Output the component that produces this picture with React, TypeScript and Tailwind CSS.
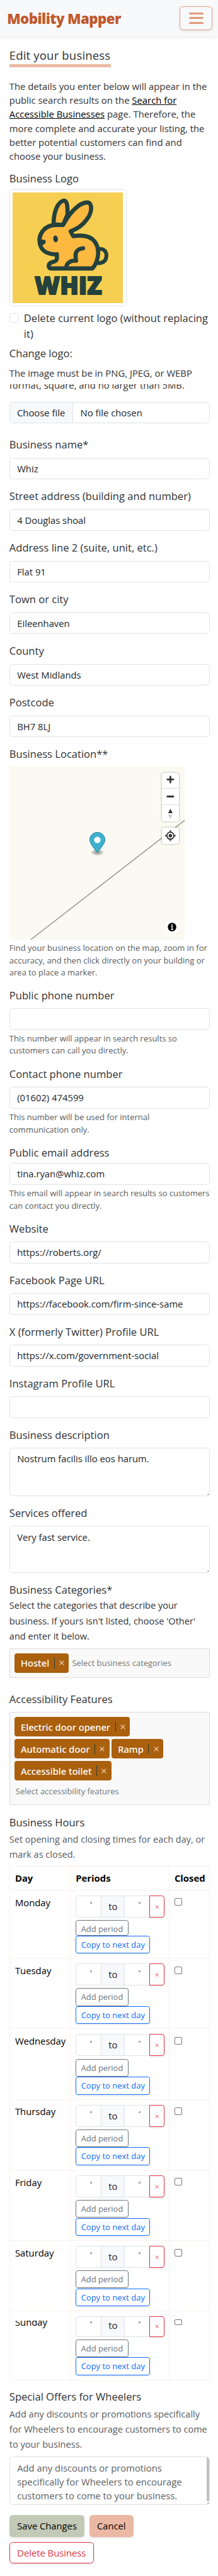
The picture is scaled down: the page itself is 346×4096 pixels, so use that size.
import type { ReactNode } from "react";

function Label({ children }: { children: ReactNode }) {
  return <div className="h-[24.86px] whitespace-nowrap text-[16.57px] leading-[24.86px] text-[#2f3235]">{children}</div>;
}

function Input({ value = "" }: { value?: string }) {
  return (
    <div className="h-[34.85px] rounded-[5.5px] border border-[#dee2e6] bg-white pl-[11.4px] text-[14.8px] leading-[33px] whitespace-nowrap text-[#212529]">
      {value}
    </div>
  );
}

function Field({ label, value }: { label: string; value?: string }) {
  return (
    <div className="h-[82px]">
      <Label>{label}</Label>
      <div className="h-[7.43px]" />
      <Input value={value} />
    </div>
  );
}

function Help({ lines }: { lines: string[] }) {
  return (
    <div className="pt-[4px] text-[13px] leading-[19.5px] whitespace-nowrap text-[#595c5f]">
      {lines.map((l) => (
        <div key={l}>{l}</div>
      ))}
    </div>
  );
}

function Grip() {
  return (
    <svg className="absolute right-[1px] bottom-[1px] h-[2px] w-[2px]" viewBox="0 0 2 2">
      <path d="M0 2L2 0V2Z" fill="#555" />
    </svg>
  );
}

function Tag({ children }: { children: ReactNode }) {
  return (
    <div className="flex h-[31.3px] items-center rounded-[4px] bg-[#aa600d] pl-[10px] font-['Noto_Sans',sans-serif] text-[14.7px] font-medium text-white">
      <span className="whitespace-nowrap">{children}</span>
      <span className="ml-[7.5px] h-[16.6px] w-[1px] bg-[#2f3d31]" />
      <span className="flex w-[22.5px] justify-center">
        <svg className="h-[8px] w-[8px]" viewBox="0 0 8 8">
          <path d="M0.6 0.6L7.4 7.4M7.4 0.6L0.6 7.4" stroke="#f8ddc0" strokeWidth="1.1" />
        </svg>
      </span>
    </div>
  );
}

function Clock() {
  return (
    <svg className="h-[3.4px] w-[3.4px]" viewBox="0 0 10 10">
      <circle cx="5" cy="5" r="4" fill="none" stroke="#444" strokeWidth="1.8" />
      <path d="M5 2.5V5H7" fill="none" stroke="#444" strokeWidth="1.2" />
    </svg>
  );
}

type DayProps = { day: string; kind?: "first" | "last" };

function DayRow({ day, kind }: DayProps) {
  const first = kind === "first";
  const last = kind === "last";
  return (
    <div
      className={
        "flex border-b border-[#fcefe9] text-[14.857px] text-black " +
        (first ? "h-[108.4px]" : last ? "h-[110.2px]" : "h-[112.2px]")
      }
    >
      <div className="w-[96.5px] shrink-0 border-r border-[#fcefe9] pl-[8.1px]">
        {last ? (
          <div className="pt-[14.4px]">
            <div className="h-[14px] overflow-hidden">
              <div className="-mt-[8.9px] leading-[22.28px]">{day}</div>
            </div>
          </div>
        ) : (
          <div className="pt-[7.7px] leading-[22.28px]">{day}</div>
        )}
      </div>
      <div className="w-[156.4px] shrink-0 border-r border-[#fcefe9] pt-[8px] pl-[7.9px]">
        <div className={last ? "flex w-[140.8px] h-[32.4px]" : "flex w-[140.8px] h-[35px]"}>
          <div className={"flex w-[40px] justify-center rounded-l-[5.5px] border border-r-0 border-[#dee2e6] pl-[7.5px] " + (last ? "pt-[7px]" : "pt-[9.3px]")}>
            <Clock />
          </div>
          <div className={"w-[38.2px] border border-[#dee2e6] bg-[#f8f9fc] text-center text-[#212529] " + (last ? "leading-[27.5px]" : "leading-[33px]")}>to</div>
          <div className={"flex w-[38.9px] justify-center border border-x-0 border-[#dee2e6] pl-[7.9px] " + (last ? "pt-[7px]" : "pt-[9.3px]")}>
            <Clock />
          </div>
          <div className={"flex w-[23.7px] justify-center rounded-r-[4px] border border-[#dc3545] shadow-[0_2px_3px_rgba(0,0,0,0.08)] " + (last ? "pt-[11.5px]" : "pt-[14px]")}>
            <svg className="h-[6.4px] w-[6.4px]" viewBox="0 0 8 8">
              <path d="M0.8 0.8L7.2 7.2M7.2 0.8L0.8 7.2" stroke="#dc3545" strokeWidth="1.1" />
            </svg>
          </div>
        </div>
        <div className="h-[4.1px]" />
        <div
          className={
            "w-[83.6px] rounded-[3.7px] border border-[#6c757d] text-center text-[12.9px] leading-[27.4px] whitespace-nowrap text-[#6c757d] shadow-[0_2px_3px_rgba(0,0,0,0.08)] " +
            (first ? "h-[24.6px]" : "h-[28.3px]")
          }
        >
          Add period
        </div>
        <div className="relative mt-[0.4px] h-[28.4px] w-[118.2px] rounded-[3.7px] border border-[#0d6efd] bg-white text-center text-[12.98px] leading-[26.8px] whitespace-nowrap text-[#0d6efd] shadow-[0_2px_3px_rgba(0,0,0,0.08)]">
          Copy to next day
        </div>
      </div>
      <div className="flex-1 pt-[12.5px] pl-[8.2px]">
        <div className={"w-[12.1px] rounded-[2px] border border-[#767676] " + (last ? "h-[9.8px]" : "h-[12.1px]")} />
      </div>
    </div>
  );
}

function RabbitLogo() {
  return (
    <svg className="h-[176px] w-[175.6px]" viewBox="36 45 852 855" preserveAspectRatio="none">
      <rect x="36" y="45" width="852" height="855" fill="#f6cf52" />
      <g stroke="#24413d" strokeWidth="32" strokeLinejoin="round" strokeLinecap="round">
        <path d="M700 481C742 477 762 505 758 540C754 576 730 592 694 591" fill="#f8c94c" strokeWidth="29" />
        <path d="M352 292C350 205 380 118 430 108C458 106 460 160 459 215L425 296Z" fill="#fbb940" />
        <path
          d="M425 296C470 210 545 122 612 122C656 128 646 205 607 254C580 292 532 328 483 345L503 383C570 372 633 378 668 424C702 470 702 535 677 592C670 608 660 622 650 632L327 632C308 628 307 592 342 583C368 577 377 571 377 556L377 523C320 526 268 506 251 458C236 412 244 370 272 338C302 304 340 296 370 296Z"
          fill="#fbb940"
        />
        <path d="M579 476C535 480 516 508 521 545L525 573C482 567 450 592 448 626" fill="none" strokeWidth="31" />
      </g>
      <ellipse cx="367" cy="404" rx="18" ry="26" fill="#24413d" transform="rotate(-8 367 404)" />
      <path d="M250 408L279 411C295 415 296 442 277 446L264 452L268 470L245 460Z" fill="#24413d" />
      <text
        x="206"
        y="832"
        textLength="518"
        lengthAdjust="spacingAndGlyphs"
        fill="#24413d"
        stroke="#24413d"
        strokeWidth="9"
        strokeLinejoin="round"
        className="font-['Open_Sans'] text-[188px] font-extrabold"
      >
        WHIZ
      </text>
    </svg>
  );
}

function BusinessMap() {
  return (
    <div className="relative h-[275.2px] w-[278.7px] overflow-hidden bg-[#fafaf2]">
      <svg className="absolute inset-0 h-full w-full" viewBox="0 0 278.7 275.2">
        <path d="M33.2 275.6L279.2 84.4" stroke="#8c8c88" strokeWidth="1.3" />
      </svg>
      <svg className="absolute top-[104.3px] left-[126.8px] h-[38.1px] w-[25.1px]" viewBox="0 0 27 41">
        <defs>
          <radialGradient id="pinShadow">
            <stop offset="10%" stopOpacity="0.4" />
            <stop offset="100%" stopOpacity="0.1" />
          </radialGradient>
        </defs>
        <ellipse cx="13.5" cy="34.8" rx="10.5" ry="5.25" fill="url(#pinShadow)" />
        <path
          fill="#3fb1ce"
          d="M27,13.5C27,19.07 20.25,27 14.75,34.5C14.02,35.5 12.98,35.5 12.25,34.5C6.75,27 0,19.22 0,13.5C0,6.04 6.04,0 13.5,0C20.96,0 27,6.04 27,13.5Z"
        />
        <path
          d="M26.5 13.5C26.5 19 19.8 26.7 14.3 34.2C13.9 34.8 13.1 34.8 12.7 34.2C7.2 26.7 .5 19 .5 13.5C.5 6.3 6.3 .5 13.5 .5C20.7 .5 26.5 6.3 26.5 13.5Z"
          fill="none"
          stroke="#000"
          strokeOpacity="0.25"
        />
        <circle cx="13.5" cy="13.5" r="5.5" fill="#fff" />
      </svg>
      <div className="absolute top-[9.7px] left-[242.5px] w-[26.9px] rounded-[3.7px] bg-white shadow-[0_0_0_1.86px_rgba(0,0,0,0.1)]">
        <svg className="block h-[77.2px] w-[26.9px]" viewBox="0 0 26.9 77.2">
          <path d="M0 24.4H26.9M0 50.7H26.9" stroke="#ddd" strokeWidth="0.95" />
          <path d="M13.4 6V15.2M8.8 10.4H18M8.8 37.5H18" stroke="#333" strokeWidth="2.8" strokeLinecap="round" />
          <path d="M9.8 63.9L13.4 57L17 63.9Z" fill="#333" />
          <path d="M9.8 66.3L13.4 73.2L17 66.3Z" fill="#ccc" />
        </svg>
      </div>
      <div className="absolute top-[97.1px] left-[242.5px] h-[26px] w-[26.9px] rounded-[3.7px] bg-white shadow-[0_0_0_1.86px_rgba(0,0,0,0.1)]">
        <svg className="block h-[26px] w-[26.9px]" viewBox="0 0 26.9 26">
          <circle cx="13.4" cy="12.8" r="5.6" fill="none" stroke="#333" strokeWidth="1.8" />
          <circle cx="13.4" cy="12.8" r="2.8" fill="#333" />
          <path d="M13.4 5V7.5M13.4 18.1V20.6M5.6 12.8H8.1M18.7 12.8H21.2" stroke="#333" strokeWidth="1.9" strokeLinecap="round" />
        </svg>
      </div>
      <svg className="absolute top-[243.8px] left-[247.1px] h-[22.2px] w-[22.2px]" viewBox="0 0 22.2 22.2">
        <circle cx="11.1" cy="11.1" r="11.1" fill="#fff" />
        <circle cx="11.1" cy="11.1" r="6.8" fill="#000" />
        <circle cx="11.1" cy="7.7" r="1.1" fill="#fff" />
        <path d="M9.6 10H11.3V14.8M9.6 15H12.9" stroke="#fff" strokeWidth="1.5" fill="none" />
      </svg>
    </div>
  );
}

export default function App() {
  return (
    <div className="h-[4096px] w-[346px] overflow-hidden bg-white font-['Open_Sans',sans-serif] text-[14.857px] text-[#333]">
      <header className="relative flex h-[57.5px] justify-between bg-[#f8f9fb] pr-[9px] pl-[11.2px] shadow-[0_2px_4px_rgba(0,0,0,0.075)]">
        <div className="pt-[12.5px] text-[22.28px] leading-[33.4px] font-extrabold tracking-[-0.6px] whitespace-nowrap text-[#c0592d]">Mobility Mapper</div>
        <div className="mt-[10.2px] flex h-[37.4px] w-[52px] flex-col items-center justify-center gap-[4.6px] rounded-[6px] border border-[#e29a7c] shadow-[0_2px_4px_rgba(0,0,0,0.08)]">
          <div className="h-[3px] w-[23px] rounded-full bg-[#e09878]" />
          <div className="h-[3px] w-[23px] rounded-full bg-[#e09878]" />
          <div className="h-[3px] w-[23px] rounded-full bg-[#e09878]" />
        </div>
      </header>

      <main className="pr-[13px] pl-[14.8px]">
        <div className="h-[68.2px] pt-[16.3px]">
          <h1 className="h-[33.7px] w-[161px] border-b-[5px] border-[#ebb9a5] text-[18.57px] leading-[27.2px] tracking-[0.15px] whitespace-nowrap text-[#2f3235]">
            Edit your business
          </h1>
        </div>

        <div className="h-[145.9px] leading-[22.28px] whitespace-nowrap">
          <div>The details you enter below will appear in the</div>
          <div>
            public search results on the <a className="text-black underline">Search for</a>
          </div>
          <div>
            <a className="text-black underline">Accessible Businesses</a> page. Therefore, the
          </div>
          <div>more complete and accurate your listing, the</div>
          <div>better potential customers can find and</div>
          <div>choose your business.</div>
        </div>

        <div className="h-[29.9px]">
          <Label>Business Logo</Label>
        </div>
        <div className="h-[192.5px]">
          <div className="flex h-[185.4px] w-[185.8px] items-center justify-center rounded-[5.5px] border border-[#dee2e6]">
            <RabbitLogo />
          </div>
        </div>
        <div className="flex h-[56.4px]">
          <div className="mt-[3.8px] h-[14.86px] w-[14.86px] shrink-0 rounded-[3.7px] border border-[#dee2e6]" />
          <div className="ml-[8.2px] text-[16.57px] leading-[24.86px] whitespace-nowrap text-[#2f3235]">
            <div>Delete current logo (without replacing</div>
            <div>it)</div>
          </div>
        </div>
        <div className="h-[32px]">
          <Label>Change logo:</Label>
        </div>
        <div className="h-[56.4px] whitespace-nowrap">
          <div className="h-[28.5px] leading-[22.28px]">The image must be in PNG, JPEG, or WEBP</div>
          <div className="h-[14px] overflow-hidden">
            <div className="-mt-[9.6px] leading-[22.28px]">format, square, and no larger than 5MB.</div>
          </div>
        </div>
        <div className="h-[56.5px]">
          <div className="flex h-[34.6px] overflow-hidden rounded-[5.5px] border border-[#dee2e6] leading-[32.6px] whitespace-nowrap text-[#212529]">
            <div className="w-[99.9px] border-r border-[#dee2e6] bg-[#f8f9fb] pl-[11.2px]">Choose file</div>
            <div className="pl-[11.8px]">No file chosen</div>
          </div>
        </div>

        <Field label="Business name*" value="Whiz" />
        <Field label="Street address (building and number)" value="4 Douglas shoal" />
        <Field label="Address line 2 (suite, unit, etc.)" value="Flat 91" />
        <Field label="Town or city" value="Eileenhaven" />
        <Field label="County" value="West Midlands" />
        <Field label="Postcode" value="BH7 8LJ" />

        <div className="h-[383.5px]">
          <Label>Business Location**</Label>
          <div className="h-[6.9px]" />
          <BusinessMap />
          <Help lines={["Find your business location on the map, zoom in for", "accuracy, and then click directly on your building or", "area to place a marker."]} />
        </div>

        <div className="h-[125.4px]">
          <Label>Public phone number</Label>
          <div className="h-[7.43px]" />
          <Input />
          <Help lines={["This number will appear in search results so", "customers can call you directly."]} />
        </div>
        <div className="h-[124.9px]">
          <Label>Contact phone number</Label>
          <div className="h-[7.43px]" />
          <Input value="(01602) 474599" />
          <Help lines={["This number will be used for internal", "communication only."]} />
        </div>
        <div className="h-[120.5px]">
          <Label>Public email address</Label>
          <div className="h-[3.3px]" />
          <Input value="tina.ryan@whiz.com" />
          <Help lines={["This email will appear in search results so customers", "can contact you directly."]} />
        </div>

        <Field label="Website" value="https://roberts.org/" />
        <Field label="Facebook Page URL" value="https://facebook.com/firm-since-same" />
        <Field label="X (formerly Twitter) Profile URL" value="https://x.com/government-social" />
        <Field label="Instagram Profile URL" />

        <div className="h-[124.4px]">
          <Label>Business description</Label>
          <div className="relative mt-[7.43px] h-[77.2px] rounded-[5.5px] border border-[#dee2e6] pt-[5.6px] pl-[11.4px] text-[14.8px] leading-[22.28px] text-[#212529]">
            Nostrum facilis illo eos harum.
            <Grip />
          </div>
        </div>
        <div className="h-[121.7px]">
          <Label>Services offered</Label>
          <div className="relative mt-[7.43px] h-[74.4px] rounded-[5.5px] border border-[#dee2e6] pt-[5.6px] pl-[11.4px] text-[14.8px] leading-[22.28px] text-[#212529]">
            Very fast service.
            <Grip />
          </div>
        </div>

        <div className="h-[105.2px]">
          <Label>Business Categories*</Label>
          <div className="text-[14.56px] leading-[24.46px] whitespace-nowrap">
            <div>Select the categories that describe your</div>
            <div>business. If yours isn't listed, choose 'Other'</div>
            <div>and enter it below.</div>
          </div>
        </div>
        <div className="h-[69.6px]">
          <div className="flex h-[47px] items-center rounded-[2px] border border-[#dcdcdc] bg-[#f9f9f9] pl-[7.2px]">
            <Tag>Hostel</Tag>
            <span className="ml-[5.3px] text-[12.96px] whitespace-nowrap text-[#777]">Select business categories</span>
          </div>
        </div>

        <div className="h-[32.1px]">
          <Label>Accessibility Features</Label>
        </div>
        <div className="h-[163.2px]">
          <div className="flex h-[148px] flex-col gap-[3.7px] rounded-[2px] border border-[#dcdcdc] bg-[#f9f9f9] pt-[6.7px] pl-[7.2px]">
            <div className="flex">
              <Tag>Electric door opener</Tag>
            </div>
            <div className="flex gap-[3.5px]">
              <Tag>Automatic door</Tag>
              <Tag>Ramp</Tag>
            </div>
            <div className="flex">
              <Tag>Accessible toilet</Tag>
            </div>
            <div className="mt-[4.2px] pl-[1.8px] text-[12.96px] leading-[19.5px] whitespace-nowrap text-[#777]">Select accessibility features</div>
          </div>
        </div>

        <div className="h-[81.2px]">
          <Label>Business Hours</Label>
          <div className="mt-[1px] text-[14.51px] leading-[24.1px] whitespace-nowrap text-[#595c5f]">
            <div>Set opening and closing times for each day, or</div>
            <div>mark as closed.</div>
          </div>
        </div>

        <div className="w-[318.2px] border border-b-0 border-[#fcefe9]">
          <div className="flex h-[38px] border-b border-[#fcefe9] leading-[37.5px] font-bold text-black">
            <div className="w-[96.5px] shrink-0 border-r border-[#fcefe9] pl-[8.1px]">Day</div>
            <div className="w-[156.4px] shrink-0 border-r border-[#fcefe9] pl-[7.9px]">Periods</div>
            <div className="pl-[8.2px]">Closed</div>
          </div>
          <DayRow day="Monday" kind="first" />
          <DayRow day="Tuesday" />
          <DayRow day="Wednesday" />
          <DayRow day="Thursday" />
          <DayRow day="Friday" />
          <DayRow day="Saturday" />
          <DayRow day="Sunday" kind="last" />
        </div>

        <div className="h-[120.7px] pt-[14.1px]">
          <Label>Special Offers for Wheelers</Label>
          <div className="mt-[1.4px] text-[14.56px] leading-[24.3px] whitespace-nowrap text-[#595c5f]">
            <div>Add any discounts or promotions specifically</div>
            <div>for Wheelers to encourage customers to come</div>
            <div>to your business.</div>
          </div>
        </div>
        <div className="h-[92.8px]">
          <div className="relative h-[77px] overflow-hidden rounded-[5.5px] border border-[#dee2e6] pt-[5.8px] pl-[11.4px] text-[14.82px] leading-[22.2px] whitespace-nowrap text-[#5d6063]">
            <div>Add any discounts or promotions</div>
            <div>specifically for Wheelers to encourage</div>
            <div>customers to come to your business.</div>
            <div className="absolute top-0 right-0 h-[70.4px] w-[4px] bg-[#c1c1c1]" />
            <Grip />
          </div>
        </div>

        <div className="flex gap-[7.4px] leading-[35px] whitespace-nowrap text-black">
          <div className="h-[34.9px] w-[119.6px] rounded-[5.5px] bg-[#c2c9b6] text-center text-[14.75px] shadow-[0_2px_3px_rgba(0,0,0,0.1)]">Save Changes</div>
          <div className="h-[34.9px] w-[70px] rounded-[5.5px] bg-[#ebb8a4] text-center text-[14.75px] shadow-[0_2px_3px_rgba(0,0,0,0.1)]">Cancel</div>
        </div>
        <div className="mt-[7.8px] h-[34.8px] w-[134px] rounded-[5.5px] border border-[#dc3545] text-center text-[14.75px] leading-[33px] whitespace-nowrap text-[#dc3545] shadow-[0_2px_3px_rgba(0,0,0,0.1)]">
          Delete Business
        </div>
      </main>
    </div>
  );
}
